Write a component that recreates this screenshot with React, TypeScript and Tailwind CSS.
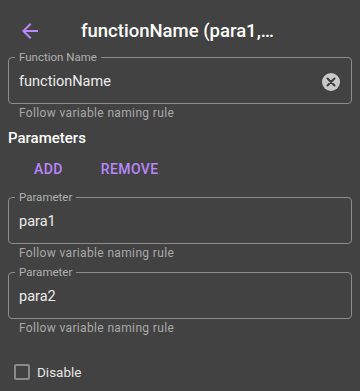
import React from "react";

const font = { fontFamily: "Roboto, 'Noto Sans', sans-serif" };

interface FieldProps {
  label: string;
  value: string;
  clearable?: boolean;
}

const OutlinedField: React.FC<FieldProps> = ({ label, value, clearable }) => {
  return (
    <div className="px-2">
      <fieldset className="border border-[#8c8c8c] rounded px-[6px] pb-[9px] m-0">
        <legend className="px-1 text-[11.5px] leading-4 text-[#b0b0b0]">{label}</legend>
        <div className="flex items-center h-6 mt-[5px] pl-1 pr-[5px]">
          <span className="flex-1 text-[14.5px] leading-6 text-[#ececec]">{value}</span>
          {clearable && (
            <span className="flex items-center justify-center w-[18px] h-[18px] rounded-full bg-[#c9c9c9]">
              <svg width="10" height="10" viewBox="0 0 10 10">
                <path d="M1.5 1.5 L8.5 8.5 M8.5 1.5 L1.5 8.5" stroke="#3e3e3e" strokeWidth="2" strokeLinecap="round" />
              </svg>
            </span>
          )}
        </div>
      </fieldset>
      <p className="mt-[1px] pl-[11px] text-xs leading-4 text-[#a9a9a9] tracking-[0.35px]">
        Follow variable naming rule
      </p>
    </div>
  );
};

export default function App() {
  return (
    <div className="w-[360px] h-[391px] bg-[#424242] overflow-hidden" style={font}>
      <header className="flex items-center h-7 mt-[17px] mb-1 pl-[18px]">
        <svg width="24" height="24" viewBox="0 0 24 24" className="shrink-0">
          <path d="M20 11H7.83l5.59-5.59L12 4l-8 8 8 8 1.41-1.41L7.83 13H20v-2z" fill="#bb86fc" />
        </svg>
        <h1 className="ml-[39px] whitespace-nowrap text-[18.5px] leading-7 font-medium text-white">
          functionName (para1,…
        </h1>
      </header>

      <OutlinedField label="Function Name" value="functionName" clearable />

      <h2 className="mt-[5px] px-2 text-[15px] leading-6 font-medium text-white">Parameters</h2>

      <div className="flex gap-[38px] ml-[34px] mt-[9px]">
        <button className="text-sm leading-5 font-medium tracking-[0.4px] text-[#bb86fc]">ADD</button>
        <button className="text-sm leading-5 font-medium tracking-[0.4px] text-[#bb86fc]">REMOVE</button>
      </div>

      <div className="mt-[10px]">
        <OutlinedField label="Parameter" value="para1" />
      </div>
      <div className="mt-[3px]">
        <OutlinedField label="Parameter" value="para2" />
      </div>

      <label className="flex items-center h-6 mt-6 pl-[14px]">
        <span className="w-4 h-4 border-2 border-[#8a8a8a] rounded-[2px]"></span>
        <span className="ml-[7px] text-[13.5px] text-[#e6e6e6]">Disable</span>
      </label>
    </div>
  );
}
